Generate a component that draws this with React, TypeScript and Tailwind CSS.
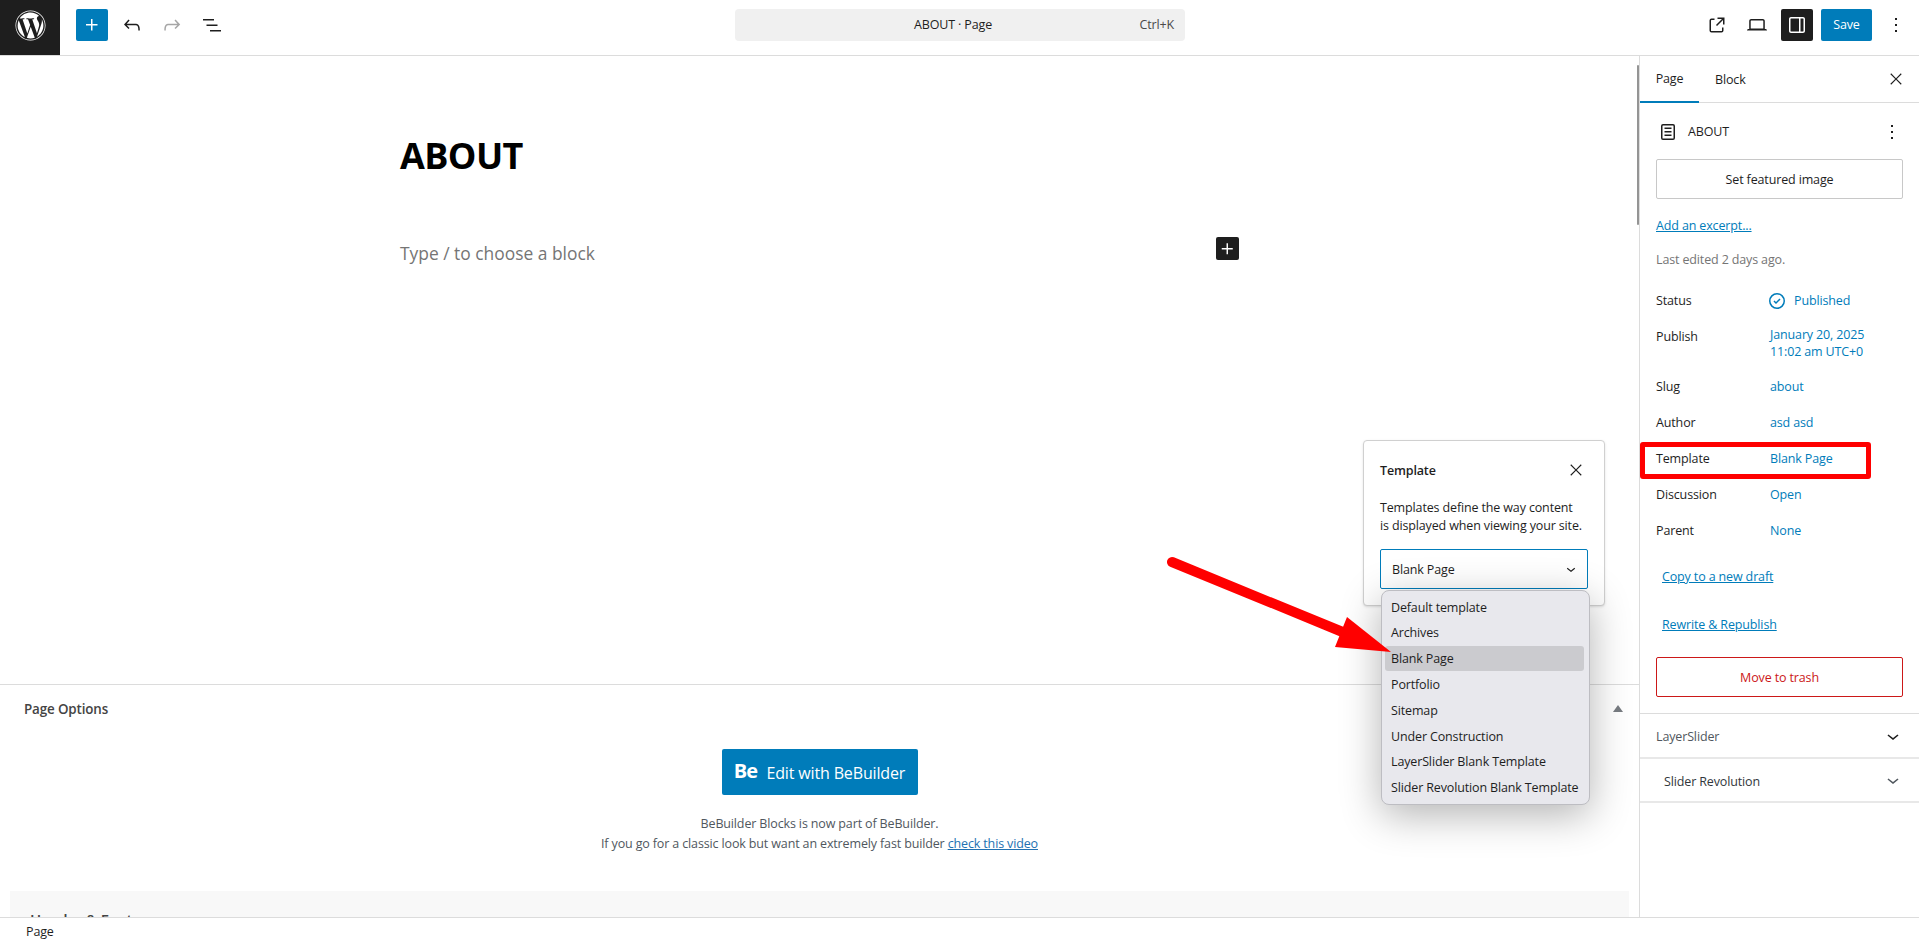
import React from 'react';
import { FaWordpress } from 'react-icons/fa';

type IconProps = { d: string; className?: string };

const Icon: React.FC<IconProps> = ({ d, className }) => (
  <svg viewBox="0 0 24 24" width="24" height="24" fill="currentColor" fillRule="evenodd" className={className}>
    <path d={d} />
  </svg>
);

const PLUS = 'M11 12.5V17.5H12.5V12.5H17.5V11H12.5V6H11V11H6V12.5H11Z';
const UNDO = 'M18.3 11.7c-.6-.6-1.4-.9-2.3-.9H6.7l2.9-3.3-1.1-1-4.5 5L8.5 16l1-1-2.7-2.7H16c.5 0 .9.2 1.3.5 1 1 1 3.4 1 4.5v.3h1.5v-.2c0-1.5 0-4.3-1.5-5.7z';
const REDO = 'M15.6 6.5l-1.1 1 2.9 3.3H8c-.9 0-1.7.3-2.3.9-1.4 1.5-1.4 4.2-1.4 5.6v.2h1.5v-.3c0-1.1 0-3.5 1-4.5.3-.3.7-.5 1.3-.5h9.2L14.5 15l1.1 1.1 4.6-4.6-4.6-5z';
const LIST = 'M3 6h11v1.5H3V6Zm3.5 5.5h11V13h-11v-1.5ZM21 17H10v1.5h11V17Z';
const EXTERNAL = 'M19.5 4.5h-7V6h4.44l-5.97 5.97 1.06 1.06L18 7.06v4.44h1.5v-7Zm-13 1a2 2 0 0 0-2 2v10a2 2 0 0 0 2 2h10a2 2 0 0 0 2-2v-3H17v3a.5.5 0 0 1-.5.5h-10a.5.5 0 0 1-.5-.5v-10a.5.5 0 0 1 .5-.5h3V5.5h-3Z';
const LAPTOP = 'M20.5 16h-.7V8c0-1.1-.9-2-2-2H6.2c-1.1 0-2 .9-2 2v8h-.7c-.8 0-1.5.7-1.5 1.5h20c0-.8-.7-1.5-1.5-1.5zM5.7 8c0-.3.2-.5.5-.5h11.6c.3 0 .5.2.5.5v7.6H5.7V8z';
const DRAWER = 'M18 4H6c-1.1 0-2 .9-2 2v12c0 1.1.9 2 2 2h12c1.1 0 2-.9 2-2V6c0-1.1-.9-2-2-2zm-4 14.5H6c-.3 0-.5-.2-.5-.5V6c0-.3.2-.5.5-.5h8v13zm4.5-.5c0 .3-.2.5-.5.5h-2.5v-13H18c.3 0 .5.2.5.5v12z';
const MORE = 'M13 19h-2v-2h2v2zm0-6h-2v-2h2v2zm0-6h-2V5h2v2z';
const CLOSE = 'm13.06 12 6.47-6.47-1.06-1.06L12 10.94 5.53 4.47 4.47 5.53 10.94 12l-6.47 6.47 1.06 1.06L12 13.06l6.47 6.47 1.06-1.06L13.06 12Z';
const PAGE = 'M15.5 7.5h-7V9h7V7.5Zm-7 3.5h7v1.5h-7V11Zm7 3.5h-7V16h7v-1.5ZM17 4H7a2 2 0 0 0-2 2v12a2 2 0 0 0 2 2h10a2 2 0 0 0 2-2V6a2 2 0 0 0-2-2Zm0 1.5H7a.5.5 0 0 0-.5.5v12a.5.5 0 0 0 .5.5h10a.5.5 0 0 0 .5-.5V6a.5.5 0 0 0-.5-.5Z';
const CHEVRON = 'M17.5 11.6L12 16l-5.5-4.4.9-1.2L12 14l4.5-3.6 1 1.2z';
const PUBLISHED = 'M12 18.5a6.5 6.5 0 1 1 0-13 6.5 6.5 0 0 1 0 13ZM4 12a8 8 0 1 1 16 0 8 8 0 0 1-16 0Zm11.53-1.47-1.06-1.06L11 12.94l-1.47-1.47-1.06 1.06L11 15.06l4.53-4.53Z';

const TEMPLATES = ['Default template', 'Archives', 'Blank Page', 'Portfolio', 'Sitemap', 'Under Construction', 'LayerSlider Blank Template', 'Slider Revolution Blank Template'];

const Row: React.FC<{ label: string; children: React.ReactNode }> = ({ label, children }) => (
  <div className="flex items-center px-4 h-9">
    <div className="w-[114px] text-[#1e1e1e]">{label}</div>
    <div className="text-[#007cba]">{children}</div>
  </div>
);

const TopBar: React.FC = () => (
  <header className="h-14 shrink-0 flex items-center pb-[5px] border-b border-[#dcdcdc] bg-white">
    <div className="w-[60px] h-[55px] self-start pb-[5px] bg-[#1e1e1e] flex items-center justify-center text-white">
      <FaWordpress size={31} />
    </div>
    <div className="ml-4 w-8 h-8 rounded-[2px] bg-[#007cba] text-white flex items-center justify-center">
      <Icon d={PLUS} />
    </div>
    <Icon d={UNDO} className="ml-3 text-[#1e1e1e]" />
    <Icon d={REDO} className="ml-4 text-[#a6a6a6]" />
    <Icon d={LIST} className="ml-4 text-[#1e1e1e]" />
    <div className="ml-[511px] w-[450px] h-8 rounded bg-[#f0f0f0] flex items-center pl-[179px] pr-[11px] justify-between text-[#1e1e1e]">
      <span>ABOUT · Page</span>
      <span className="text-[#4a4a4a]">Ctrl+K</span>
    </div>
    <div className="ml-auto flex items-center pr-[11px]">
      <Icon d={EXTERNAL} className="text-[#1e1e1e]" />
      <Icon d={LAPTOP} className="ml-4 text-[#1e1e1e]" />
      <div className="ml-3 w-8 h-8 rounded-[2px] bg-[#1e1e1e] text-white flex items-center justify-center">
        <Icon d={DRAWER} />
      </div>
      <div className="ml-2 w-[51px] h-8 rounded-[2px] bg-[#007cba] text-white flex items-center justify-center">Save</div>
      <Icon d={MORE} className="ml-3 text-[#1e1e1e]" />
    </div>
  </header>
);

const Sidebar: React.FC = () => (
  <aside className="w-[280px] shrink-0 border-l border-[#dcdcdc] bg-white relative">
    <div className="h-[47px] flex items-center border-b border-[#dcdcdc] relative text-[#1e1e1e]">
      <div className="h-[47px] w-[59px] pt-[3px] flex items-center justify-center border-b-2 border-[#007cba]">Page</div>
      <div className="ml-4 pt-[3px]">Block</div>
      <Icon d={CLOSE} className="absolute right-[14px] top-[14px] w-[18px] h-[18px]" />
    </div>
    <div className="h-14 flex items-center pt-[2px] pl-4 pr-[15px] text-[#1e1e1e]">
      <Icon d={PAGE} />
      <span className="ml-2">ABOUT</span>
      <Icon d={MORE} className="ml-auto" />
    </div>
    <div className="mx-4 h-10 pt-[3px] rounded-[2px] border border-[#c8c8c8] flex items-center justify-center text-[#1e1e1e]">Set featured image</div>
    <div className="px-4 mt-[17px] text-[#007cba] underline leading-[20px]">Add an excerpt...</div>
    <div className="px-4 mt-[14px] text-[#757575] leading-[20px]">Last edited 2 days ago.</div>
    <div className="mt-[13px]">
      <Row label="Status">
        <span className="flex items-center -ml-[5px]">
          <Icon d={PUBLISHED} />
          <span className="ml-[5px]">Published</span>
        </span>
      </Row>
      <div className="flex items-start px-4 h-[50px] pt-[7px]">
        <div className="w-[114px] text-[#1e1e1e] pt-[2px]">Publish</div>
        <div className="text-[#007cba] leading-[17px]">January 20, 2025<br />11:02 am UTC+0</div>
      </div>
      <Row label="Slug">about</Row>
      <Row label="Author">asd asd</Row>
      <Row label="Template">Blank Page</Row>
      <Row label="Discussion">Open</Row>
      <Row label="Parent">None</Row>
    </div>
    <div className="pl-[22px] mt-[18px] text-[#007cba] underline leading-[20px]">Copy to a new draft</div>
    <div className="pl-[22px] mt-[28px] text-[#007cba] underline leading-[20px]">Rewrite &amp; Republish</div>
    <div className="mx-4 mt-[22px] h-10 pt-[3px] rounded-[2px] border border-[#cc1818] text-[#cc1818] flex items-center justify-center">Move to trash</div>
    <div className="mt-4 border-t border-[#dcdcdc] h-11 flex items-center pl-4 pr-[14px] text-[#50575e]">
      <span className="pt-[4px]">LayerSlider</span>
      <Icon d={CHEVRON} className="ml-auto text-[#1e1e1e]" />
    </div>
    <div className="border-t-2 border-b-2 border-[#e8e8e8] h-[46px] flex items-center pl-6 pr-[14px] text-[#32373c]">
      <span className="pt-[4px]">Slider Revolution</span>
      <Icon d={CHEVRON} className="ml-auto text-[#50575e]" />
    </div>
  </aside>
);

const MainColumn: React.FC = () => (
  <main className="flex-1 min-w-0 flex flex-col overflow-hidden relative">
    <div className="h-[628px] shrink-0 pl-[400px] relative">
      <h1 className="pt-[72px] text-[36px] tracking-[-0.6px] leading-[56px] font-bold text-black">ABOUT</h1>
      <div className="mt-[54px] flex items-center h-[30px] text-[17.4px] tracking-[0px] text-[#757575]">Type / to choose a block</div>
      <div className="absolute left-[1216px] top-[181px] w-[23px] h-[23px] rounded-[2px] bg-[#1e1e1e] text-white flex items-center justify-center">
        <Icon d={PLUS} />
      </div>
      <div className="absolute right-0 top-[9px] w-[2px] h-[160px] rounded-full bg-[#949494]" />
    </div>
    <section className="flex-1 border-t border-[#dcdcdc] flex flex-col">
      <div className="h-[47px] flex items-center justify-between pl-6 pr-4 text-[13.4px] font-semibold text-[#444]">
        <span className="pt-[2px]">Page Options</span>
        <span className="w-0 h-0 border-x-[5px] border-x-transparent border-b-[7px] border-b-[#787c82]" />
      </div>
      <div className="flex flex-col items-center text-[#50575e]">
        <div className="mt-[17px] w-[196px] h-[46px] rounded-[2px] bg-[#007cba] text-white flex items-center justify-center gap-[9px] text-[16px]">
          <span className="font-bold text-[20px] tracking-[-0.8px] leading-none -mt-[3px]">Be</span>
          <span className="pt-[2px]">Edit with BeBuilder</span>
        </div>
        <p className="mt-[19px] leading-[20px]">BeBuilder Blocks is now part of BeBuilder.</p>
        <p className="leading-[20px]">If you go for a classic look but want an extremely fast builder <span className="text-[#2271b1] underline">check this video</span></p>
      </div>
      <div className="mx-[10px] mt-[37px] h-12 bg-[#f8f8f8] pl-[20px] pt-[17px] font-semibold text-[15px] text-[#444]">Header &amp; Footer</div>
    </section>
  </main>
);

const TemplatePopover: React.FC = () => (
  <>
    <div className="absolute left-[1363px] top-[440px] w-[242px] h-[166px] rounded border border-[#d0d0d0] bg-white shadow-sm px-4 pt-5 text-[#1e1e1e]">
      <div className="flex items-center justify-between h-[20px]">
        <span className="font-semibold">Template</span>
        <Icon d={CLOSE} className="w-[18px] h-[18px] mr-[3px] -mt-[3px]" />
      </div>
      <p className="mt-[18px] leading-[18px] whitespace-nowrap">Templates define the way content<br />is displayed when viewing your site.</p>
      <div className="mt-[14px] w-[208px] h-10 border border-[#007cba] rounded-[2px] flex items-center justify-between pl-[11px] pr-[7px]">
        <span className="pt-[3px]">Blank Page</span>
        <Icon d={CHEVRON} className="w-[18px] h-[18px]" />
      </div>
    </div>
    <div className="absolute left-[1381px] top-[590px] w-[209px] h-[215px] rounded-lg border border-[#bdbdc2] bg-[#e8e8ed] shadow-[0_10px_40px_rgba(0,0,0,0.3)] pt-[3px] pl-[3px] pr-[5px] text-[#1e1e1e]">
      {TEMPLATES.map((t) => (
        <div key={t} className={`h-[25.8px] flex items-center pl-[6px] pt-[2px] rounded-[3px] whitespace-nowrap ${t === 'Blank Page' ? 'bg-[#cbcbcf]' : ''}`}>{t}</div>
      ))}
    </div>
  </>
);

const Annotations: React.FC = () => (
  <>
    <div className="absolute left-[1640px] top-[442px] w-[231px] h-[37px] border-[5px] border-[#ff0000] rounded-[3px]" />
    <svg className="absolute left-0 top-0 pointer-events-none" width="1919" height="941">
      <line x1="1172" y1="562" x2="1345" y2="633" stroke="#ff0000" strokeWidth="10" strokeLinecap="round" />
      <polygon points="1347,617 1391,652 1335,647" fill="#ff0000" />
    </svg>
  </>
);

const App: React.FC = () => (
  <div className="relative w-[1919px] h-[941px] overflow-hidden flex flex-col bg-white text-[12.5px] tracking-[-0.14px] font-['Open_Sans',sans-serif]">
    <TopBar />
    <div className="flex-1 flex min-h-0">
      <MainColumn />
      <Sidebar />
    </div>
    <footer className="h-6 shrink-0 border-t border-[#dcdcdc] bg-white flex items-center pt-[6px] pl-[26px] text-[#1e1e1e]">Page</footer>
    <TemplatePopover />
    <Annotations />
  </div>
);

export default App;
